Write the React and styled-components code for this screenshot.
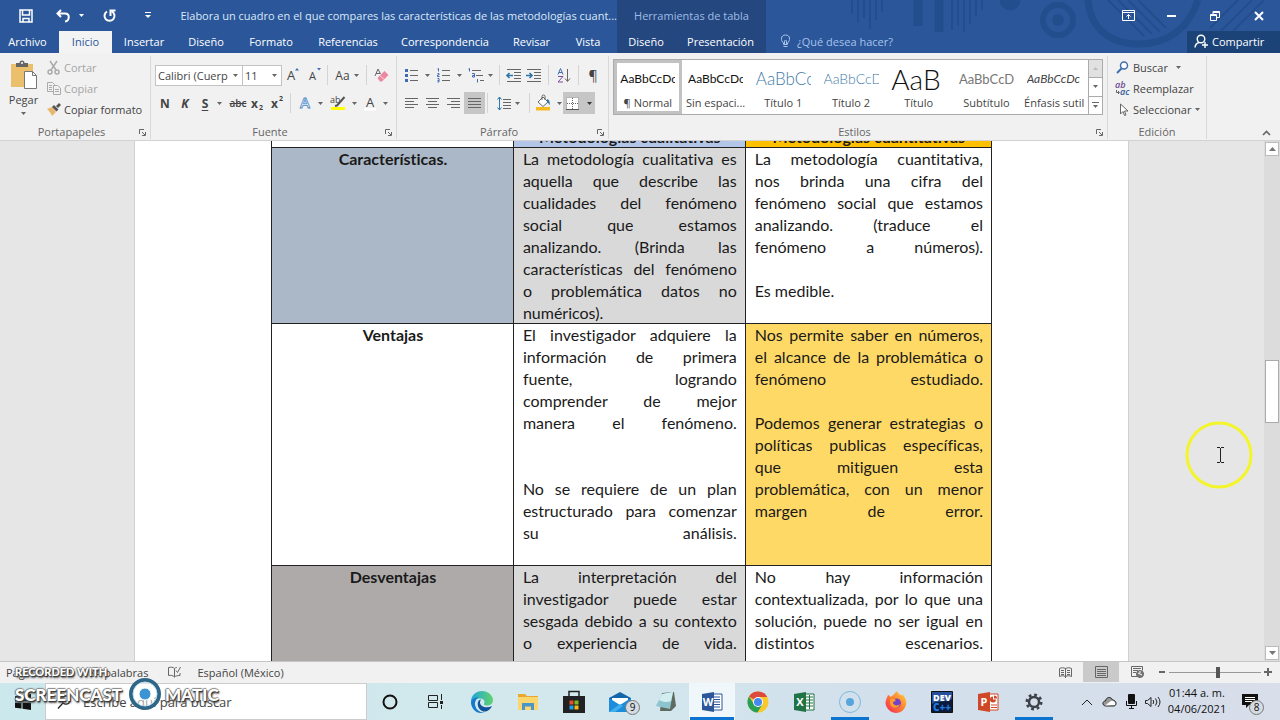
import React from 'react';
import styled, { createGlobalStyle, css } from 'styled-components';

const uiFont = '"Open Sans", "Noto Sans", sans-serif';
const docFont = 'Lato, "Open Sans", sans-serif';

const GlobalStyle = createGlobalStyle`
    *, *::before, *::after {
        box-sizing: border-box;
    }
    body {
        margin: 0;
        font-family: ${uiFont};
        font-size: 11px;
        color: #444;
    }
    button, input, select {
        margin: 0;
        padding: 0;
        border: 0;
        background: none;
        font: inherit;
        color: inherit;
    }
    svg {
        display: block;
        flex: none;
        overflow: visible;
    }
`;

const Window = styled.div`
    display: flex;
    flex-direction: column;
    height: 100vh;
    overflow: hidden;
    position: relative;
`;

/* ---------- title bar ---------- */

const Header = styled.header`
    display: flex;
    flex: none;
    background: #2b579a;
    color: #fff;
`;

const HeaderSide = styled.div`
    display: flex;
    flex-direction: column;
    flex: ${(props) => (props.$grow ? '1' : '0 0 617px')};
    position: relative;
    min-width: 0;
`;

const TopLine = styled.div`
    display: flex;
    align-items: center;
    height: 31px;
    justify-content: ${(props) => (props.$end ? 'flex-end' : 'flex-start')};
    padding-left: ${(props) => (props.$end ? '0' : '14px')};
    position: relative;
`;

const TitleButton = styled.button`
    display: flex;
    align-items: center;
    justify-content: center;
    gap: 8px;
    height: 28px;
    width: ${(props) => props.$w}px;
    color: #e6eefa;
`;

const DocTitle = styled.h1`
    margin: 0;
    font-size: 11px;
    font-weight: 400;
    color: #dbe7f7;
    white-space: nowrap;
`;

const TabLine = styled.nav`
    display: flex;
    align-items: stretch;
    height: 22px;
    position: relative;
`;

const Tab = styled.button`
    width: ${(props) => props.$w}px;
    padding-bottom: 2px;
    text-align: center;
    white-space: nowrap;
    color: #fff;
    ${(props) => props.$file && css`
        margin-right: 4px;
    `}
    ${(props) => props.$active && css`
        background: #f3f3f3;
        color: #2b579a;
    `}
`;

const ContextTabs = styled.div`
    flex: none;
    background: #24477f;
`;

const ContextTitle = styled.div`
    height: 31px;
    line-height: 31px;
    text-align: center;
    color: #9fbce6;
`;

const Tell = styled.label`
    display: flex;
    align-items: center;
    gap: 6px;
    flex: 1;
    padding: 0 0 2px 14px;
    color: #a7c2ea;

    input {
        width: 140px;
        outline: none;
    }
    input::placeholder {
        color: #a7c2ea;
        opacity: 1;
    }
`;

const Share = styled.button`
    display: flex;
    align-items: center;
    gap: 4px;
    width: 93px;
    padding: 0 0 2px 7px;
    background: #1c4377;
    color: #fff;
`;

const Pattern = styled.svg`
    position: absolute;
    right: 0;
    top: 0;
    overflow: hidden;
`;

/* ---------- ribbon ---------- */

const Ribbon = styled.div`
    display: flex;
    flex: none;
    height: 88px;
    background: #f1f1f1;
    border-bottom: 1px solid #d2d2d2;
`;

const GroupBox = styled.section`
    display: flex;
    flex-direction: column;
    flex: 0 0 ${(props) => props.$w}px;
    border-right: 1px solid #d8d8d8;
    margin: 3px 0 1px;
`;

const GroupBody = styled.div`
    display: flex;
    flex: 1;
    padding: 0 4px;
    flex-direction: ${(props) => (props.$rows ? 'column' : 'row')};
    padding-top: ${(props) => (props.$rows ? 5 : 0)}px;
`;

const GroupFoot = styled.div`
    display: flex;
    align-items: center;
    height: 14px;
    padding: 0 4px;
    color: #666;

    h2 {
        flex: 1;
        margin: 0;
        font-size: 11px;
        font-weight: 400;
        text-align: center;
        line-height: 14px;
    }
`;

const ToolRow = styled.div`
    display: flex;
    align-items: center;
    height: 28px;
`;

const Tool = styled.button`
    display: flex;
    align-items: center;
    justify-content: center;
    gap: ${(props) => props.$gap || 6}px;
    width: ${(props) => props.$w}px;
    height: 22px;
    font-size: ${(props) => props.$size || 12}px;
    font-weight: ${(props) => (props.$bold ? 700 : 400)};
    font-style: ${(props) => (props.$italic ? 'italic' : 'normal')};
    background: ${(props) => (props.$active ? '#c6c6c6' : 'none')};

    sub, sup {
        font-size: 7px;
        line-height: 8px;
    }
    sub {
        align-self: flex-end;
        margin-bottom: 2px;
    }
    sup {
        align-self: flex-start;
        margin-top: 3px;
    }
    u {
        text-underline-offset: 2px;
    }
    s {
        font-size: 10px;
        font-weight: 600;
    }
`;

const Divider = styled.span`
    width: 1px;
    height: 20px;
    margin: 0 ${(props) => props.$m}px;
    background: #d4d4d4;
`;

const Combo = styled.span`
    position: relative;
    width: ${(props) => props.$w}px;
    height: 21px;
    border: 1px solid #c3c3c3;
    margin-right: -1px;
    background: #fff;

    select {
        appearance: none;
        width: calc(100% - 14px);
        height: 19px;
        padding-left: 2px;
        outline: none;
        overflow: hidden;
        text-overflow: clip;
    }
    svg {
        position: absolute;
        right: 4px;
        top: 8px;
        pointer-events: none;
    }
`;

const PasteButton = styled.button`
    display: flex;
    flex-direction: column;
    align-items: center;
    width: 39px;
    padding-top: 4px;

    span {
        line-height: 19px;
        margin-bottom: 3px;
    }
`;

const CommandList = styled.div`
    display: flex;
    flex-direction: column;
    padding-top: 1px;
    padding-left: ${(props) => props.$indent || 0}px;
`;

const Command = styled.button`
    display: flex;
    align-items: center;
    gap: 4px;
    height: 21px;
    white-space: nowrap;
    color: ${(props) => (props.disabled ? '#a5a5a5' : '#444')};

    span + svg {
        margin-left: ${(props) => props.$caretGap || 0}px;
    }
`;

const CommandIcon = styled.i`
    display: flex;
    justify-content: center;
    width: ${(props) => props.$w || 13}px;
`;

const Gallery = styled.div`
    display: flex;
    flex: 1;
    height: 56px;
    margin-top: 3px;
    border: 1px solid #ababab;
    background: #fff;
`;

const StyleItem = styled.button`
    flex: 1 1 0;
    min-width: 0;
    display: flex;
    flex-direction: column;
    align-items: center;
    border: 3px solid ${(props) => (props.$active ? '#c2c2c2' : 'transparent')};
    white-space: nowrap;
`;

const Preview = styled.span`
    width: 55px;
    height: 32px;
    line-height: 32px;
    overflow: hidden;
    text-align: left;
    font-family: ${docFont};
    font-size: ${(props) => props.$size || 12}px;
    font-style: ${(props) => (props.$italic ? 'italic' : 'normal')};
    font-weight: ${(props) => (props.$light ? 300 : 400)};
    color: ${(props) => props.$color || '#111'};
`;

const StyleName = styled.span`
    line-height: 15px;
`;

const GalleryScroll = styled.div`
    display: flex;
    flex-direction: column;
    width: 14px;
    border-left: 1px solid #ababab;

    button {
        flex: 1;
        display: flex;
        align-items: center;
        justify-content: center;
    }
    button + button {
        border-top: 1px solid #ababab;
    }
    button:disabled {
        background: #e1e1e1;
    }
`;

const Collapse = styled.button`
    margin: auto 9px 4px auto;
`;

/* ---------- document ---------- */

const Workspace = styled.main`
    display: flex;
    flex: 1;
    min-height: 0;
    background: #e6e6e6;
    position: relative;
`;

const Canvas = styled.div`
    flex: 1;
    overflow: hidden;
    padding: 0 135px 0 134px;
`;

const Page = styled.article`
    min-height: 100%;
    padding: 0 136px;
    background: #fff;
    border: solid #d0d0d0;
    border-width: 0 1px;
`;

const CompareTable = styled.table`
    width: 100%;
    margin-top: -15px;
    border-collapse: separate;
    border-spacing: 0;
    border-left: 1px solid #222;
    table-layout: fixed;
    font-family: ${docFont};
    font-size: 16px;
    font-variant-ligatures: none;
    line-height: 22px;
    color: #1a1a1a;
`;

const cell = css`
    padding: 0 9px;
    vertical-align: top;
    background: ${(props) => props.$fill || '#fff'};
    box-shadow: inset -1px -1px 0 #222;
`;

const HeadCell = styled.th`
    ${cell}
    height: 22px;
    font-weight: 700;
    text-align: center;
`;

const Cell = styled.td`
    ${cell}
`;

const Line = styled.span`
    display: block;
    min-height: 22px;
    white-space: nowrap;
    text-align: ${(props) => (props.$left ? 'left' : 'justify')};
    text-align-last: ${(props) => (props.$left ? 'left' : 'justify')};
`;

const ScrollBar = styled.div`
    display: flex;
    flex-direction: column;
    justify-content: space-between;
    width: 16px;
    padding: 1px 1px;
    background: #dcdcdc;

    button {
        display: flex;
        align-items: center;
        justify-content: center;
        height: 14px;
        border: 1px solid #bbb;
        background: #fff;
    }
`;

const ScrollTrack = styled.div`
    flex: 1;
    display: grid;
    grid-template-rows: 42fr 13fr 46fr;
`;

const ScrollThumb = styled.div`
    grid-row: 2;
    border: 1px solid #aaa;
    background: #fff;
`;

const Pointer = styled.svg`
    position: absolute;
    right: 26px;
    top: 279px;
`;

/* ---------- status bar ---------- */

const StatusBar = styled.footer`
    display: flex;
    flex: none;
    align-items: center;
    height: 22px;
    padding: 0 8px 1px 6px;
    background: #f1f1f1;
    border-top: 1px solid #c6c6c6;
    white-space: nowrap;
`;

const StatusText = styled.span`
    margin-right: ${(props) => props.$after || 0}px;
`;

const Views = styled.div`
    display: flex;
    margin: 0 3px 0 auto;
`;

const ViewButton = styled.button`
    display: flex;
    align-items: center;
    justify-content: center;
    width: 36px;
    height: 20px;
    background: ${(props) => (props.$active ? '#cacaca' : 'none')};
`;

const Zoom = styled.input`
    appearance: none;
    width: 92px;
    height: 12px;
    margin: 0 3px;
    background: linear-gradient(#999, #999) center / 100% 1px no-repeat;

    &::-webkit-slider-thumb {
        appearance: none;
        width: 4px;
        height: 11px;
        background: #555;
    }
`;

/* ---------- taskbar ---------- */

const Taskbar = styled.div`
    display: flex;
    flex: none;
    align-items: stretch;
    height: 37px;
    background: linear-gradient(90deg, #cbe8ec, #d3e8ed 45%, #d2dfec 70%, #d8deea);
    color: #111;
`;

const StartButton = styled.button`
    display: flex;
    align-items: center;
    justify-content: center;
    width: 45px;
`;

const Search = styled.label`
    display: flex;
    align-items: center;
    gap: 12px;
    width: 322px;
    padding-left: 12px;
    background: #fff;
    border: 1px solid #ccc;

    input {
        flex: 1;
        min-width: 0;
        font-size: 13px;
        outline: none;
    }
    input::placeholder {
        color: #444;
        opacity: 1;
    }
`;

const TaskButton = styled.button`
    display: flex;
    align-items: center;
    justify-content: center;
    width: 46px;
    position: relative;
    background: ${(props) => (props.$active ? '#f0f7fb' : 'none')};

    ${(props) => props.$running && css`
        &::after {
            content: '';
            position: absolute;
            left: ${props.$active ? 1 : 4}px;
            right: ${props.$active ? 1 : 4}px;
            bottom: 0;
            height: 3px;
            background: #0b74d1;
        }
    `}
`;

const Badge = styled.span`
    position: absolute;
    right: ${(props) => props.$right || 3}px;
    bottom: 5px;
    width: 15px;
    height: 15px;
    border: 1px solid #777;
    border-radius: 50%;
    background: #d5dce1;
    font-size: 10px;
    line-height: 13px;
    text-align: center;
`;

const Tray = styled.div`
    display: flex;
    margin-left: auto;
    padding-right: 10px;
`;

const TrayButton = styled.button`
    display: flex;
    align-items: center;
    justify-content: center;
    position: relative;
    width: ${(props) => props.$w || 22}px;
`;

const Clock = styled.time`
    width: 66px;
    padding-top: 2px;
    text-align: center;
    line-height: 16px;
    white-space: nowrap;

    span {
        display: block;
    }
`;

/* ---------- recorder watermark ---------- */

const Watermark = styled.div`
    position: absolute;
    left: 15px;
    bottom: 10px;
    font-family: ${docFont};
    font-weight: 900;
    color: #fff;
    text-shadow: 1px 1px 1px #333, -1px 0 1px #777, 0 -1px 1px #888, 1px 2px 2px #555;
    pointer-events: none;
`;

const WatermarkTop = styled.div`
    font-size: 11px;
    line-height: 12px;
`;

const WatermarkName = styled.div`
    display: flex;
    align-items: center;
    gap: 3px;
    height: 32px;
    font-size: 17px;

    svg {
        margin-left: 3px;
    }
`;

const Caret = ({ color = '#666' }) => (
    <svg width="5" height="3" viewBox="0 0 5 3"><path d="M0 0h5L2.5 3z" fill={color} /></svg>
);

const Glyph = ({ w = 16, h = 16, box, children, ...rest }) => (
    <svg width={w} height={h} viewBox={box || `0 0 ${w} ${h}`} fill="none" stroke="#666" strokeWidth="1" {...rest}>
        {children}
    </svg>
);

const Launcher = () => (
    <Glyph w={7} h={7}><path d="M.5 5V.5H5M3 3l3 3M6.500 3v3.500H3" /></Glyph>
);

const Group = ({ title, width, rows, launcher, children }) => (
    <GroupBox $w={width}>
        <GroupBody $rows={rows}>{children}</GroupBody>
        <GroupFoot>
            <h2>{title}</h2>
            {launcher && <button aria-label={`${title}: opciones`}><Launcher /></button>}
        </GroupFoot>
    </GroupBox>
);

const Lines = ({ short = 'left' }) => {
    const x = { left: 1, center: 3, right: 5, full: 1 }[short];
    const len = short === 'full' ? 13 : 9;
    return (
        <Glyph w={15} h={11}>
            <path d={`M1 .5h13M${x} 3.500h${len}M1 6.500h13M${x} 9.500h${len}`} />
        </Glyph>
    );
};

const BulletIcon = () => (
    <Glyph w={14} h={15}>
        <path d="M5 2.500h8M5 7.500h8M5 12.500h8" />
        <path d="M0 2.500h3M0 7.500h3M0 12.500h3" stroke="#3e6db5" strokeWidth="3" />
    </Glyph>
);

const NumberIcon = () => (
    <Glyph w={14} h={15}>
        <path d="M5 2.500h8M5 7.500h8M5 12.500h8" />
        <path d="M.5 1l1-.5v3M.5 5.500h1.500v1.500H.5v1.500h2M.5 10.500h1.500v3.500H.5M.5 12.500H2" stroke="#3e6db5" />
    </Glyph>
);

const MultiIcon = () => (
    <Glyph w={16} h={15}>
        <path d="M4 2.500h9M8 7.500h7M12 12.500h4" />
        <path d="M.5 1l1-.5v3M4 5.500h2.500V9H4.500V7.500h2M9.500 11v3.500" stroke="#3e6db5" />
    </Glyph>
);

const IndentIcon = ({ right }) => (
    <Glyph w={16} h={13}>
        <path d="M1 .5h14M8 3.500h7M8 6.500h7M8 9.500h7M1 12.500h14" />
        <path d={right ? 'M0 6.500h6M3.500 4L6 6.500 3.500 9' : 'M7 6.500H1M3.500 4L1 6.500 3.500 9'} stroke="#2e75a8" strokeWidth="1.600" />
    </Glyph>
);

const SortIcon = () => (
    <Glyph w={14} h={15}>
        <path d="M1 6.500L3.500.5 6 6.500M2 4.500h3" stroke="#3e6db5" />
        <path d="M1 8.500h5l-5 5.500h5" stroke="#7a4fa0" />
        <path d="M10.500 1v12M8 10.500l2.500 3 2.500-3" />
    </Glyph>
);

const SpacingIcon = () => (
    <Glyph w={14} h={15}>
        <path d="M6 3.500h8M6 6.500h8M6 9.500h8M6 12.500h8" />
        <path d="M2.500 1v13M.5 3.500l2-2.500 2 2.500M.5 11.500l2 2.500 2-2.500" stroke="#2e75a8" />
    </Glyph>
);

const FillIcon = () => (
    <Glyph w={16} h={16}>
        <path d="M3 7l5-5 5 5-5 4.500z" fill="#fff" />
        <path d="M7 5V1.500a1.500 1.500 0 013 0V5" />
        <path d="M12 4c3 1 3 4 2.500 6.500-1-3-2-3-2.500-3z" fill="#2e75a8" stroke="none" />
        <path d="M1 12h14v3.500H1z" fill="#f6b922" stroke="none" />
    </Glyph>
);

const BorderIcon = () => (
    <Glyph w={13} h={13}>
        <path d="M0 0h13v13H0z" fill="#fff" stroke="none" />
        <path d="M.5.5h12v12H.5z" strokeDasharray="1 1" />
        <path d="M6.500 1v11M1 6.500h11" strokeDasharray="1 1" />
        <path d="M0 12.500h13" stroke="#555" />
    </Glyph>
);

const PasteIcon = () => (
    <Glyph w={28} h={30}>
        <path d="M1 4h22v23H1z" fill="#eac06c" stroke="none" />
        <path d="M6 3h3.500a2.500 2.500 0 015 0H18v4H6z" fill="#666" stroke="none" />
        <circle cx="12" cy="3" r="1" fill="#fff" stroke="none" />
        <path d="M14.500 11.500h8l4 4v13h-12z" fill="#fff" stroke="#777" />
        <path d="M22.500 11.500v4h4" stroke="#777" />
    </Glyph>
);

const CutIcon = () => (
    <Glyph w={13} h={14} stroke="#aaa" strokeWidth="1.500">
        <path d="M3 0l6 9M10 0L4 9" />
        <circle cx="3" cy="11" r="2" />
        <circle cx="10" cy="11" r="2" />
    </Glyph>
);

const CopyIcon = () => (
    <Glyph w={14} h={13} stroke="#aaa">
        <path d="M.5.5h5l2 2V9.500h-7zM2 3.500h3M2 5.500h3M2 7.500h3" />
        <path d="M6.500 3.500h4l3 2.500v6.500h-7z" fill="#f1f1f1" />
        <path d="M8 7.500h4M8 9.500h4" />
    </Glyph>
);

const BrushIcon = () => (
    <Glyph w={14} h={13}>
        <path d="M0 6l5-2 4 5-4 4C4 10 2 8 0 6z" fill="#eab66c" stroke="none" />
        <path d="M5 4l2-2 4.500 4.500-2 2zM9 3l3-3 2 2-3 3z" fill="#555" stroke="none" />
    </Glyph>
);

const EraserIcon = () => (
    <Glyph w={14} h={14}>
        <path d="M1 8l3-7 2.500 5M2 5.500h4" />
        <path d="M3.500 10l7-7 4 4-6.500 6.500H6z" fill="#ec87a0" stroke="none" />
        <path d="M6 7.500l4 4" stroke="#fbe3e9" />
    </Glyph>
);

const HighlightIcon = () => (
    <Glyph w={16} h={15}>
        <text x="0" y="7" fontSize="9" fill="#444" stroke="none">ab</text>
        <path d="M14.500 1L7 9.500l-2 .5" stroke="#555" strokeWidth="2" />
        <path d="M1 11h14v3H1z" fill="#ff0" stroke="none" />
    </Glyph>
);

const FontColorIcon = () => (
    <Glyph w={14} h={15}>
        <text x="3" y="11" fontSize="13" fill="#444" stroke="none">A</text>
        <path d="M1 12h12v2.500H1z" fill="#fff" stroke="none" />
    </Glyph>
);

const GrowIcon = ({ down }) => (
    <Glyph w={14} h={15}>
        <text x="1" y="12" fontSize={down ? 11 : 13} fill="#444" stroke="none">A</text>
        <path d={down ? 'M9 0h4l-2 2.500z' : 'M9 2.500h4L11 0z'} fill="#3e6db5" stroke="none" />
    </Glyph>
);

const EffectIcon = () => (
    <Glyph w={13} h={14}>
        <text x="1" y="12" fontSize="15" fontWeight="600" fill="#f4f9ff" stroke="#4a8ac7" strokeWidth=".8">A</text>
    </Glyph>
);

const FindIcon = () => (
    <Glyph w={13} h={13} stroke="#3f6fae" strokeWidth="2">
        <circle cx="8" cy="4.500" r="3.500" fill="#fff" strokeWidth="1.500" />
        <path d="M5.500 7.500L1 12" />
    </Glyph>
);

const ReplaceIcon = () => (
    <Glyph w={15} h={14}>
        <text x="0" y="6" fontSize="9" fontWeight="600" fill="#6a4b93" stroke="none">ab</text>
        <text x="5" y="13" fontSize="9" fontWeight="600" fill="#2b579a" stroke="none">ac</text>
        <path d="M1.500 8v2.500H4M3 9l1.500 1.500L3 12" />
    </Glyph>
);

const SelectIcon = () => (
    <Glyph w={13} h={14}>
        <path d="M4.500 1v10l2.500-2.500 1.500 4 1.500-.5-1.500-4H12z" fill="#fff" />
    </Glyph>
);

const OfficeIcon = ({ letter, color, grid }) => (
    <svg width="22" height="22" viewBox="0 0 22 22">
        <path d="M10 3h11v16H10z" fill="#fff" stroke={color} />
        <path d={grid ? 'M13 6h7M13 9h7M13 12h7M13 15h7M16.500 4v14' : 'M13 6h6M13 8.500h6M13 11h6M13 13.500h6M13 16h6'} stroke={color} fill="none" />
        <path d="M1 3l12-2v20L1 19z" fill={color} />
        <text x="7" y="15" textAnchor="middle" fontSize="11" fontWeight="700" fill="#fff">{letter}</text>
    </svg>
);

const PowerPointIcon = () => (
    <svg width="22" height="22" viewBox="0 0 22 22">
        <path d="M10 3h11v16H10z" fill="#fff" stroke="#d04727" />
        <path d="M16 5.500a3 3 0 103 3h-3z" fill="#d04727" />
        <path d="M17 4.500v3h3a3 3 0 00-3-3z" fill="#d04727" />
        <path d="M14 14h6M14 16.500h6" stroke="#d04727" />
        <path d="M1 3l12-2v20L1 19z" fill="#d04727" />
        <text x="7" y="15" textAnchor="middle" fontSize="11" fontWeight="700" fill="#fff">P</text>
    </svg>
);

const EdgeIcon = () => (
    <svg width="24" height="24" viewBox="0 0 24 24">
        <defs>
            <linearGradient id="edgeTop" x1="0" y1="0" x2="1" y2="0">
                <stop offset="0" stopColor="#1fa5de" />
                <stop offset="1" stopColor="#62d36b" />
            </linearGradient>
        </defs>
        <path d="M1 12C1 5 6 1 12 1s11 4.500 11 9c0 4-3 5.500-6 5.500-2 0-3.500-.7-3-1.700 1.500-2 0-5.300-3.500-5.300C6 8.500 2 10 1 12z" fill="url(#edgeTop)" />
        <path d="M1 12c.5-3 4-5 8-4.500-3 1-5 5-3.500 9s5 6 9 6C7 25 1 19 1 12z" fill="#1679c9" />
        <path d="M8 12c-1.500 5 3 10.500 8 9.500 3-1 5-3 6-5.500-5 2.500-12 1-12-3.500 0-1 .3-2 1-3-1.500 0-2.500 1-3 2.500z" fill="#125399" />
    </svg>
);

const FolderIcon = () => (
    <svg width="22" height="20" viewBox="0 0 22 20">
        <path d="M1 2h7l2 2h11v14H1z" fill="#e9a82f" />
        <path d="M1 5h20v13H1z" fill="#fbd66f" />
        <path d="M5 18v-7h12v7h-3v-3.500H8V18z" fill="#4a95c9" />
    </svg>
);

const StoreIcon = () => (
    <svg width="22" height="24" viewBox="0 0 22 24">
        <path d="M6 7V1.500h10V7" fill="none" stroke="#222" strokeWidth="1.500" />
        <path d="M0 6h22v17H0z" fill="#222" />
        <path d="M6.500 10.500h4v4h-4z" fill="#e8502d" />
        <path d="M11.500 10.500h4v4h-4z" fill="#7fba25" />
        <path d="M6.500 15.500h4v4h-4z" fill="#1b9fe4" />
        <path d="M11.500 15.500h4v4h-4z" fill="#fbb912" />
    </svg>
);

const MailIcon = () => (
    <svg width="24" height="22" viewBox="0 0 24 22">
        <path d="M1 7l11-6 11 6v14H1z" fill="#1565ac" />
        <path d="M4 7h16v8H4z" fill="#fff" />
        <path d="M1 7l11 7 11-7v14H1z" fill="#1d8ddb" />
        <path d="M1 21l11-8 3 2-8 6z" fill="#3fb0ee" />
    </svg>
);

const NotebookIcon = () => (
    <svg width="24" height="22" viewBox="0 0 24 22">
        <path d="M8 2l12-1 2 14-5 5H6z" fill="#5f6b5e" />
        <path d="M8 3l11-2-3 17-14-3z" fill="#8cc5cf" />
        <path d="M8 3l11-2-2 9c-4 2-8 1-12-1z" fill="#d3eef1" />
    </svg>
);

const ChromeIcon = () => (
    <svg width="22" height="22" viewBox="0 0 22 22">
        <circle cx="11" cy="11" r="10.500" fill="#f8c92c" />
        <path d="M11 11L2 5.500A10.500 10.500 0 0120.300 6H11z" fill="#dd4b3e" />
        <path d="M2 5.500a10.500 10.500 0 008.500 16L15 14l-8-1z" fill="#29a056" />
        <circle cx="11" cy="11" r="5" fill="#fff" />
        <circle cx="11" cy="11" r="4" fill="#4688f1" />
    </svg>
);

const FirefoxIcon = () => (
    <svg width="22" height="22" viewBox="0 0 22 22">
        <defs>
            <linearGradient id="fox" x1="1" y1="0" x2="0" y2="1">
                <stop offset="0" stopColor="#ffdc3e" />
                <stop offset=".5" stopColor="#ff7b30" />
                <stop offset="1" stopColor="#f0225f" />
            </linearGradient>
        </defs>
        <path d="M3 4c1 0 2 1 2.500 2C8 5 9 3 12 0c1 3 3 3 5 5V3c4 4 5 8 4 11-1.500 5-5.500 8-10 8S1 18 .5 12C.5 9 2 7 3 4z" fill="url(#fox)" />
        <circle cx="11.500" cy="12" r="4.500" fill="#7442c8" />
        <path d="M5 8c3-1 5 0 6 1.500-1 1-3 1-3 2.500 1 3 5 3 7 1-1 5-9 5-10-.5z" fill="#ff9a2c" />
    </svg>
);

const DevIcon = () => (
    <svg width="22" height="22" viewBox="0 0 22 22">
        <path d="M.5.5h21v21H.5z" fill="#24509c" stroke="#111" />
        <path d="M1 13C8 9 14 12 21 8v13H1z" fill="#0c1a3c" />
        <text x="11" y="10" textAnchor="middle" fontSize="9" fontWeight="800" fill="#fff">DEV</text>
        <text x="11" y="20" textAnchor="middle" fontSize="10" fontWeight="800" fill="#1f7be0">C++</text>
    </svg>
);

const GearIcon = () => (
    <svg width="18" height="18" viewBox="0 0 18 18" fill="none" stroke="#3c4248">
        <circle cx="9" cy="9" r="5" strokeWidth="2.500" />
        <circle cx="9" cy="9" r="7.200" strokeWidth="2.600" strokeDasharray="2.800 2.855" />
    </svg>
);

const galleryItems = [
    { name: '¶ Normal', sample: 'AaBbCcDc', active: true },
    { name: 'Sin espaci...', sample: 'AaBbCcDc' },
    { name: 'Título 1', sample: 'AaBbCc', size: 17, color: '#3f7ba9', light: true },
    { name: 'Título 2', sample: 'AaBbCcD', size: 14, color: '#3f7ba9', light: true },
    { name: 'Título', sample: 'AaB', size: 28, light: true },
    { name: 'Subtítulo', sample: 'AaBbCcD', size: 13, color: '#777' },
    { name: 'Énfasis sutil', sample: 'AaBbCcDc', italic: true, color: '#444' },
];

const mainTabs = [
    ['Archivo', 55], ['Inicio', 53], ['Insertar', 64], ['Diseño', 60], ['Formato', 70],
    ['Referencias', 84], ['Correspondencia', 110], ['Revisar', 63], ['Vista', 50],
];

// A leading "<" keeps a line flush left instead of justified.
const tableRows = [
    {
        label: 'Características.',
        fills: ['#abb8c7', '#d9d9d9', '#fff'],
        left: [
            'La metodología cualitativa es', 'aquella que describe las', 'cualidades del fenómeno',
            'social que estamos', 'analizando. (Brinda las', 'características del fenómeno',
            'o problemática datos no', '<numéricos).',
        ],
        right: [
            'La metodología cuantitativa,', 'nos brinda una cifra del', 'fenómeno social que estamos',
            'analizando. (traduce el', 'fenómeno a números).', '', '<Es medible.',
        ],
    },
    {
        label: 'Ventajas',
        fills: ['#fff', '#fff', '#ffd966'],
        left: [
            'El investigador adquiere la', 'información de primera', 'fuente, logrando',
            'comprender de mejor', 'manera el fenómeno.', '', '', 'No se requiere de un plan',
            'estructurado para comenzar', 'su análisis.', '',
        ],
        right: [
            'Nos permite saber en números,', 'el alcance de la problemática o', 'fenómeno estudiado.', '',
            'Podemos generar estrategias o', 'políticas publicas específicas,', 'que mitiguen esta',
            'problemática, con un menor', 'margen de error.',
        ],
    },
    {
        label: 'Desventajas',
        fills: ['#aeaaaa', '#d9d9d9', '#fff'],
        left: [
            'La interpretación del', 'investigador puede estar', 'sesgada debido a su contexto',
            'o experiencia de vida.', '',
        ],
        right: [
            'No hay información', 'contextualizada, por lo que una', 'solución, puede no ser igual en',
            'distintos escenarios.',
        ],
    },
];

const Paragraphs = ({ lines }) => lines.map((line, i) => (
    <Line key={i} $left={line.startsWith('<')}>{line.replace('<', '')}</Line>
));

const TitleBar = () => (
    <Header>
        <HeaderSide>
            <TopLine>
                <TitleButton $w={24} aria-label="Guardar">
                    <Glyph w={14} h={14} stroke="#fff" strokeWidth="1.500">
                        <path d="M1 1h12v12H1zM3.500 1v5h7V1M4 13V9.500h6V13" />
                    </Glyph>
                </TitleButton>
                <TitleButton $w={66} aria-label="Deshacer">
                    <Glyph w={15} h={14} stroke="#fff" strokeWidth="2">
                        <path d="M5 1L1.500 4.500 5 8M2 4.500h7c5 0 5 7 0 8" />
                    </Glyph>
                    <Caret color="#fff" />
                </TitleButton>
                <TitleButton $w={12} aria-label="Rehacer">
                    <Glyph w={13} h={14} stroke="#fff" strokeWidth="2">
                        <path d="M4 2.500a5 5 0 105 0M7.500 7V1.500h5" />
                    </Glyph>
                </TitleButton>
                <TitleButton $w={66} aria-label="Personalizar barra">
                    <Glyph w={6} h={7} stroke="#fff"><path d="M0 .5h6" /><path d="M0 3h6L3 6z" fill="#fff" stroke="none" /></Glyph>
                </TitleButton>
                <DocTitle>Elabora un cuadro en el que compares las características de las metodologías cuant...</DocTitle>
            </TopLine>
            <TabLine>
                {mainTabs.map(([name, w]) => (
                    <Tab key={name} $w={w} $file={name === 'Archivo'} $active={name === 'Inicio'}>{name}</Tab>
                ))}
            </TabLine>
        </HeaderSide>
        <ContextTabs>
            <ContextTitle>Herramientas de tabla</ContextTitle>
            <TabLine>
                <Tab $w={58}>Diseño</Tab>
                <Tab $w={91}>Presentación</Tab>
            </TabLine>
        </ContextTabs>
        <HeaderSide $grow>
            <Pattern width="430" height="53" viewBox="0 0 430 53" fill="none" stroke="#234e8e" aria-hidden="true">
                <path d="M2 0v14M8 0v22M14 0v18M20 0v29M26 0v20M32 0v12" strokeWidth="2" />
                <path d="M68 0v26M89 0v32" strokeWidth="9" />
                <path d="M102 0v30M108 0v26M114 0v32M120 0v24M126 0v16M132 0v10" strokeWidth="2" />
                <path d="M150 0a10 10 0 0020 0" fill="#234e8e" />
                <circle cx="208" cy="20" r="15" strokeWidth="6" />
                <circle cx="208" cy="20" r="6" fill="#234e8e" stroke="none" />
                <path d="M238 0c2 28 22 44 50 44 32 0 52-18 60-44" strokeWidth="7" />
                <path d="M258 0l36 36M268 0l34 34M278 0l32 32M288 0l28 28M360 28l28-28M370 32l32-32M382 32l32-32" strokeWidth="2" />
            </Pattern>
            <TopLine $end>
                <TitleButton $w={42} aria-label="Opciones de la cinta">
                    <Glyph w={13} h={11} stroke="#fff">
                        <path d="M.5.500h12v10H.5zM.5 2.500h12M6.500 9V4.500M4.500 6.500l2-2 2 2" />
                    </Glyph>
                </TitleButton>
                <TitleButton $w={44} aria-label="Minimizar">
                    <Glyph w={9} h={3} stroke="#fff" strokeWidth="2"><path d="M0 2h9" /></Glyph>
                </TitleButton>
                <TitleButton $w={44} aria-label="Restaurar">
                    <Glyph w={10} h={10} stroke="#fff"><path d="M.5 3.500h6v6h-6zM3 3V.5h6.500v6H7M.5 4.500h6M3 1.500h6.500" /></Glyph>
                </TitleButton>
                <TitleButton $w={43} aria-label="Cerrar">
                    <Glyph w={10} h={10} stroke="#fff" strokeWidth="2"><path d="M1 1l8 8M9 1L1 9" /></Glyph>
                </TitleButton>
            </TopLine>
            <TabLine>
                <Tell>
                    <Glyph w={11} h={14} stroke="#a7c2ea">
                        <path d="M3.500 10.500V9C.5 6.500.5 1 5.500 1s5 5.500 2 8v1.500zM3.500 12.500h4M4.500 10V7l1-1 1 1v3" />
                    </Glyph>
                    <input aria-label="¿Qué desea hacer?" placeholder="¿Qué desea hacer?" />
                </Tell>
                <Share>
                    <Glyph w={14} h={14} stroke="#fff" strokeWidth="1.400">
                        <circle cx="7" cy="5" r="3.800" />
                        <path d="M1 13.500c.3-3 2-4.500 4-5M11 8v6M8 11h6" />
                    </Glyph>
                    Compartir
                </Share>
            </TabLine>
        </HeaderSide>
    </Header>
);

const FontGroup = () => (
    <Group title="Fuente" width={246} rows launcher>
        <ToolRow>
            <Combo $w={88}>
                <select aria-label="Fuente"><option>Calibri (Cuerpo)</option></select>
                <Caret />
            </Combo>
            <Combo $w={40}>
                <select aria-label="Tamaño de fuente"><option>11</option></select>
                <Caret />
            </Combo>
            <Tool $w={24} aria-label="Agrandar fuente"><GrowIcon /></Tool>
            <Tool $w={20} aria-label="Reducir fuente"><GrowIcon down /></Tool>
            <Divider $m={2} />
            <Tool $w={34} $gap={4}>Aa <Caret /></Tool>
            <Divider $m={2} />
            <Tool $w={23} aria-label="Borrar formato"><EraserIcon /></Tool>
        </ToolRow>
        <ToolRow>
            <Tool $w={20} $bold>N</Tool>
            <Tool $w={20} $bold $italic>K</Tool>
            <Tool $w={34} $gap={9} $bold><u>S</u> <Caret /></Tool>
            <Tool $w={18}><s>abc</s></Tool>
            <Tool $w={20} $gap={1} $bold>x<sub>2</sub></Tool>
            <Tool $w={20} $gap={1} $bold>x<sup>2</sup></Tool>
            <Divider $m={3} />
            <Tool $w={34} aria-label="Efectos de texto"><EffectIcon /><Caret /></Tool>
            <Tool $w={30} aria-label="Resaltado"><HighlightIcon /><Caret /></Tool>
            <Tool $w={34} aria-label="Color de fuente"><FontColorIcon /><Caret /></Tool>
        </ToolRow>
    </Group>
);

const ParagraphGroup = () => (
    <Group title="Párrafo" width={212} rows launcher>
        <ToolRow>
            <Tool $w={32} aria-label="Viñetas"><BulletIcon /><Caret /></Tool>
            <Tool $w={32} aria-label="Numeración"><NumberIcon /><Caret /></Tool>
            <Tool $w={30} $gap={4} aria-label="Lista multinivel"><MultiIcon /><Caret /></Tool>
            <Divider $m={4} />
            <Tool $w={20} aria-label="Disminuir sangría"><IndentIcon /></Tool>
            <Tool $w={20} aria-label="Aumentar sangría"><IndentIcon right /></Tool>
            <Divider $m={4} />
            <Tool $w={22} aria-label="Ordenar"><SortIcon /></Tool>
            <Divider $m={3} />
            <Tool $w={22} $size={14}>¶</Tool>
        </ToolRow>
        <ToolRow>
            <Tool $w={21} aria-label="Izquierda"><Lines /></Tool>
            <Tool $w={21} aria-label="Centrar"><Lines short="center" /></Tool>
            <Tool $w={21} aria-label="Derecha"><Lines short="right" /></Tool>
            <Tool $w={21} $active aria-label="Justificar"><Lines short="full" /></Tool>
            <Divider $m={2} />
            <Tool $w={36} $gap={4} aria-label="Interlineado"><SpacingIcon /><Caret /></Tool>
            <Divider $m={3} />
            <Tool $w={30} aria-label="Sombreado"><FillIcon /><Caret /></Tool>
            <Tool $w={32} $gap={8} $active aria-label="Bordes"><BorderIcon /><Caret color="#333" /></Tool>
        </ToolRow>
    </Group>
);

const RibbonBar = () => (
    <Ribbon>
        <Group title="Portapapeles" width={151} launcher>
            <PasteButton>
                <PasteIcon />
                <span>Pegar</span>
                <Caret />
            </PasteButton>
            <CommandList $indent={4}>
                <Command disabled><CommandIcon><CutIcon /></CommandIcon>Cortar</Command>
                <Command disabled><CommandIcon><CopyIcon /></CommandIcon>Copiar</Command>
                <Command><CommandIcon><BrushIcon /></CommandIcon>Copiar formato</Command>
            </CommandList>
        </Group>
        <FontGroup />
        <ParagraphGroup />
        <Group title="Estilos" width={499} launcher>
            <Gallery>
                {galleryItems.map((item) => (
                    <StyleItem key={item.name} $active={item.active}>
                        <Preview $size={item.size} $color={item.color} $italic={item.italic} $light={item.light}>
                            {item.sample}
                        </Preview>
                        <StyleName>{item.name}</StyleName>
                    </StyleItem>
                ))}
                <GalleryScroll>
                    <button disabled aria-label="Fila anterior"><Glyph w={5} h={3}><path d="M0 3h5L2.500 0z" fill="#bbb" stroke="none" /></Glyph></button>
                    <button aria-label="Fila siguiente"><Caret /></button>
                    <button aria-label="Más estilos"><Glyph w={7} h={6}><path d="M0 .5h7" /><path d="M1 3h5L3.500 6z" fill="#666" stroke="none" /></Glyph></button>
                </GalleryScroll>
            </Gallery>
        </Group>
        <Group title="Edición" width={99}>
            <CommandList $indent={3}>
                <Command $caretGap={4}><CommandIcon $w={14}><FindIcon /></CommandIcon><span>Buscar</span><Caret /></Command>
                <Command><CommandIcon $w={14}><ReplaceIcon /></CommandIcon>Reemplazar</Command>
                <Command><CommandIcon $w={14}><SelectIcon /></CommandIcon><span>Seleccionar</span><Caret /></Command>
            </CommandList>
        </Group>
        <Collapse aria-label="Contraer la cinta">
            <Glyph w={9} h={6} strokeWidth="1.600"><path d="M1 5l3.500-3.500L8 5" /></Glyph>
        </Collapse>
    </Ribbon>
);

const DocumentArea = () => (
    <Workspace>
        <Canvas>
            <Page>
                <CompareTable>
                    <colgroup>
                        <col style={{ width: '33.6%' }} />
                        <col style={{ width: '32.2%' }} />
                        <col style={{ width: '34.2%' }} />
                    </colgroup>
                    <thead>
                        <tr>
                            <HeadCell />
                            <HeadCell $fill="#b4c6e7">Metodologías cualitativas</HeadCell>
                            <HeadCell $fill="#ffc000">Metodologías cuantitativas</HeadCell>
                        </tr>
                    </thead>
                    <tbody>
                        {tableRows.map((row) => (
                            <tr key={row.label}>
                                <HeadCell scope="row" $fill={row.fills[0]}>{row.label}</HeadCell>
                                <Cell $fill={row.fills[1]}><Paragraphs lines={row.left} /></Cell>
                                <Cell $fill={row.fills[2]}><Paragraphs lines={row.right} /></Cell>
                            </tr>
                        ))}
                    </tbody>
                </CompareTable>
            </Page>
        </Canvas>
        <ScrollBar>
            <button aria-label="Subir"><Glyph w={7} h={4}><path d="M0 4h7L3.500 0z" fill="#777" stroke="none" /></Glyph></button>
            <ScrollTrack><ScrollThumb /></ScrollTrack>
            <button aria-label="Bajar"><Glyph w={7} h={4}><path d="M0 0h7L3.500 4z" fill="#777" stroke="none" /></Glyph></button>
        </ScrollBar>
        <Pointer width="70" height="70" viewBox="0 0 70 70" fill="none" aria-hidden="true">
            <circle cx="35" cy="35" r="32" stroke="#f3f52a" strokeWidth="3" />
            <path d="M33 27.500h3m1 0h3M33 42.500h3m1 0h3M36.500 28v14" stroke="#222" />
        </Pointer>
    </Workspace>
);

const Status = () => (
    <StatusBar>
        <StatusText $after={8}>Página 3 de 5</StatusText>
        <StatusText $after={20}>184 palabras</StatusText>
        <StatusText $after={16}>
            <Glyph w={13} h={12}>
                <path d="M6.500 2.500C5 1 3 1 .5 1.500v8c2.500-.5 4.500 0 6 1.500V2.500C7.500 1.500 8 1.500 9 1.500M6.500 11c1-1 3-1.500 5.500-1.500V7M8 4.500l1.500 2L12.500 1" />
            </Glyph>
        </StatusText>
        <StatusText>Español (México)</StatusText>
        <Views>
            <ViewButton aria-label="Modo de lectura">
                <Glyph w={13} h={11}><path d="M.5 1.500c2-1 4-1 6 0 2-1 4-1 6 0v8c-2-1-4-1-6 0-2-1-4-1-6 0zM6.500 1v10M2 3.500h3M2 5.500h3M2 7.500h3M8 3.500h3M8 5.500h3M8 7.500h3" /></Glyph>
            </ViewButton>
            <ViewButton $active aria-label="Diseño de impresión">
                <Glyph w={13} h={12}><path d="M.5.5h12v11H.5zM2 3.500h9M2 5.500h9M2 7.500h9M2 9.500h9" /></Glyph>
            </ViewButton>
            <ViewButton aria-label="Diseño web">
                <Glyph w={13} h={12}>
                    <path d="M6 10.500H.5V.5h11v4M2 2.500h8M2 4.500h5M2 6.500h3" />
                    <circle cx="9" cy="8" r="3.500" fill="#777" />
                    <path d="M7 7l4 2M9 5v2" stroke="#fff" />
                </Glyph>
            </ViewButton>
        </Views>
        <button aria-label="Alejar"><Glyph w={8} h={8} strokeWidth="2"><path d="M1 4h6" /></Glyph></button>
        <Zoom type="range" min="0" max="100" defaultValue="53" aria-label="Zoom" />
        <button aria-label="Acercar"><Glyph w={8} h={8} strokeWidth="2"><path d="M0 4h8M4 0v8" /></Glyph></button>
    </StatusBar>
);

const WindowsTaskbar = () => (
    <Taskbar>
        <StartButton aria-label="Inicio">
            <svg width="16" height="16" viewBox="0 0 16 16" fill="#111">
                <path d="M0 2.300L6.500 1.400V7.500H0zM7.500 1.200L16 0v7.500H7.500zM0 8.500h6.500v6.100L0 13.700zM7.500 8.500H16V16l-8.500-1.200z" />
            </svg>
        </StartButton>
        <Search>
            <Glyph w={13} h={14} stroke="#222" strokeWidth="1.200"><circle cx="8" cy="5" r="4.200" /><path d="M5 8l-5 5.500" /></Glyph>
            <input aria-label="Buscar" placeholder="Escribe aquí para buscar" />
        </Search>
        <TaskButton aria-label="Cortana">
            <Glyph w={16} h={16} stroke="#111" strokeWidth="2"><circle cx="8" cy="8" r="6.500" /></Glyph>
        </TaskButton>
        <TaskButton aria-label="Vista de tareas">
            <Glyph w={16} h={15} stroke="#222"><path d="M.5 1.500h9v5h-9zM.5 8.500h9v5h-9zM13.500 0v6M13.500 11v4" /><path d="M12 7h3v3h-3z" fill="#222" stroke="none" /></Glyph>
        </TaskButton>
        <TaskButton aria-label="Edge"><EdgeIcon /></TaskButton>
        <TaskButton aria-label="Explorador"><FolderIcon /></TaskButton>
        <TaskButton aria-label="Tienda"><StoreIcon /></TaskButton>
        <TaskButton aria-label="Correo"><MailIcon /><Badge>9</Badge></TaskButton>
        <TaskButton aria-label="Notas"><NotebookIcon /></TaskButton>
        <TaskButton $active $running aria-label="Word"><OfficeIcon letter="W" color="#2b579a" /></TaskButton>
        <TaskButton aria-label="Chrome"><ChromeIcon /></TaskButton>
        <TaskButton aria-label="Excel"><OfficeIcon letter="X" color="#1f7345" grid /></TaskButton>
        <TaskButton $running aria-label="Grabador">
            <svg width="24" height="24" viewBox="0 0 24 24">
                <circle cx="12" cy="12" r="10.500" fill="none" stroke="#7fb8de" />
                <circle cx="12" cy="12" r="4" fill="#56a5dc" />
            </svg>
        </TaskButton>
        <TaskButton aria-label="Firefox"><FirefoxIcon /></TaskButton>
        <TaskButton aria-label="Dev-C++"><DevIcon /></TaskButton>
        <TaskButton aria-label="PowerPoint"><PowerPointIcon /></TaskButton>
        <TaskButton $running aria-label="Configuración"><GearIcon /></TaskButton>
        <Tray>
            <TrayButton aria-label="Iconos ocultos">
                <Glyph w={12} h={8} stroke="#222"><path d="M1 7l5-5 5 5" /></Glyph>
            </TrayButton>
            <TrayButton aria-label="OneDrive">
                <Glyph w={15} h={11} stroke="#222"><path d="M4 10C0 10 0 5 3.500 5 4 1 9 0 10.500 4c4 0 5 6 1 6z" fill="#999" /><path d="M3 9.500L9 5c2-1 5 1 4 4z" fill="#fff" stroke="none" /></Glyph>
            </TrayButton>
            <TrayButton aria-label="Micrófono">
                <Glyph w={11} h={15} stroke="#111"><rect x="2" y="0" width="7" height="10" rx="1" fill="#111" stroke="none" /><path d="M.5 7v4.500h10V7M5.500 11v3M3 14.500h5" /></Glyph>
            </TrayButton>
            <TrayButton aria-label="Volumen">
                <Glyph w={16} h={12} stroke="#222"><path d="M.5 4.500h2L6 1.500v9l-3.500-3h-2zM8 4q1.500 2 0 4M10.500 2.500q3 3.500 0 7M13 1q4 5 0 10" /></Glyph>
            </TrayButton>
            <Clock>
                <span>01:44 a. m.</span>
                <span>04/06/2021</span>
            </Clock>
            <TrayButton $w={40} aria-label="Notificaciones">
                <Glyph w={16} h={15}><path d="M0 0h16v11H7l-3 3v-3H0z" fill="#111" stroke="none" /><path d="M3 3.500h10M3 5.500h10M3 7.500h7" stroke="#fff" /></Glyph>
                <Badge $right={6}>8</Badge>
            </TrayButton>
        </Tray>
    </Taskbar>
);

const RecorderMark = () => (
    <Watermark>
        <WatermarkTop>RECORDED WITH</WatermarkTop>
        <WatermarkName>
            <span>SCREENCAST</span>
            <svg width="34" height="34" viewBox="0 0 34 34">
                <circle cx="17" cy="17" r="14" fill="#fff" fillOpacity=".5" stroke="#2f6688" strokeWidth="4" />
                <circle cx="17" cy="17" r="12" fill="none" stroke="#b9dcf0" strokeWidth="1" />
                <circle cx="17" cy="17" r="6" fill="#3d94d3" stroke="#fff" />
            </svg>
            <span>MATIC</span>
        </WatermarkName>
    </Watermark>
);

const App = () => (
    <>
        <GlobalStyle />
        <Window>
            <TitleBar />
            <RibbonBar />
            <DocumentArea />
            <Status />
            <WindowsTaskbar />
            <RecorderMark />
        </Window>
    </>
);

export default App;
